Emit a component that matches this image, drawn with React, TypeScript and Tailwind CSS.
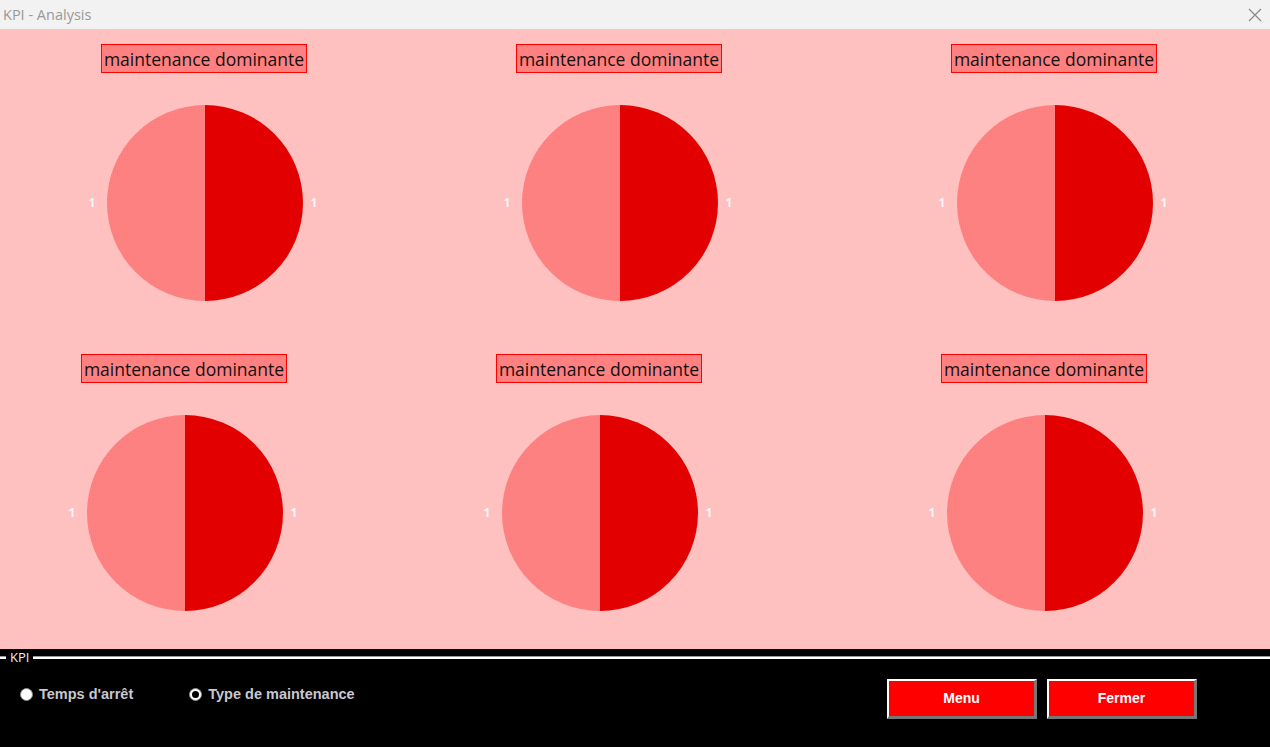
import React from "react";

function Pie() {
  return (
    <svg width="196" height="196" viewBox="0 0 196 196">
      <defs>
        <pattern id="dith" width="2" height="2" patternUnits="userSpaceOnUse">
          <rect width="2" height="2" fill="#ff8282" />
          <rect width="1" height="1" fill="#ff7a7a" />
        </pattern>
      </defs>
      <path d="M98 0 A98 98 0 0 0 98 196 Z" fill="url(#dith)" />
      <path d="M98 0 A98 98 0 0 1 98 196 Z" fill="#e30000" />
    </svg>
  );
}

function Chart({ className }: { className: string }) {
  return (
    <div className={"flex w-[240px] flex-col items-center " + className}>
      <div className="h-[29px] w-[206px] border border-[#ff0000] bg-[#ff8080] text-center text-[17.5px] leading-[28px] text-[#111] font-['Open_Sans',sans-serif] whitespace-nowrap">
        maintenance dominante
      </div>
      <div className="ml-[-6px] mt-[32px] flex h-[196px] items-center">
        <span className="w-[30px] text-center text-[12px] leading-[14px] font-bold text-[#f4f4f4] font-['Open_Sans',sans-serif]">1</span>
        <Pie />
        <span className="w-[22px] text-center text-[12px] leading-[14px] font-bold text-[#f4f4f4] font-['Open_Sans',sans-serif]">1</span>
      </div>
    </div>
  );
}

function Radio({ checked, label }: { checked: boolean; label: string }) {
  return (
    <div className="flex items-center gap-[6px]">
      {checked ? (
        <div className="flex h-[13px] w-[13px] items-center justify-center rounded-full border border-[#888] bg-white">
          <div className="h-[7px] w-[7px] rounded-full bg-black" />
        </div>
      ) : (
        <div className="h-[13px] w-[13px] rounded-full border border-[#888] bg-white" />
      )}
      <span className="text-[14.5px] font-bold text-[#c8c8d0] font-['Liberation_Sans',sans-serif] whitespace-nowrap">{label}</span>
    </div>
  );
}

function Btn({ label }: { label: string }) {
  return (
    <div className="flex h-[40px] w-[150px] items-center justify-center border-t-2 border-l-2 border-b-[3px] border-r-[3px] border-t-white border-l-white border-b-[#777] border-r-[#777] bg-[#ff0000] text-[14px] font-bold text-white font-['Liberation_Sans',sans-serif]">
      {label}
    </div>
  );
}

export default function App() {
  return (
    <div className="flex h-[747px] w-[1270px] flex-col overflow-hidden bg-black">
      <div className="flex h-[29px] items-center justify-between bg-[#f2f2f2] pl-[3px] pr-[8px]">
        <span className="text-[14.5px] text-[#999] font-['Open_Sans',sans-serif]">KPI - Analysis</span>
        <svg width="14" height="14" viewBox="0 0 14 14">
          <path d="M1 1 L13 13 M13 1 L1 13" stroke="#888" strokeWidth="1.2" />
        </svg>
      </div>
      <div className="flex h-[620px] flex-col bg-[#ffc0c0] pt-[15px]">
        <div className="flex">
          <Chart className="ml-[84px]" />
          <Chart className="ml-[175px]" />
          <Chart className="ml-[195px]" />
        </div>
        <div className="mt-[53px] flex">
          <Chart className="ml-[64px]" />
          <Chart className="ml-[175px]" />
          <Chart className="ml-[205px]" />
        </div>
      </div>
      <div className="flex flex-1 flex-col">
        <div className="mt-[1px] flex items-center">
          <div className="h-[3px] w-[6px] border-t border-t-[#999] border-b-2 border-b-white" />
          <span className="px-[4px] text-[13px] leading-[14px] text-[#e8f4ff] font-['Open_Sans',sans-serif]">KPI</span>
          <div className="h-[3px] flex-1 border-t border-t-[#999] border-b-2 border-b-white" />
        </div>
        <div className="mt-[15px] flex items-start">
          <div className="ml-[20px] mt-[5px] flex gap-[56px]">
            <Radio checked={false} label="Temps d'arrêt" />
            <Radio checked={true} label="Type de maintenance" />
          </div>
          <div className="ml-auto mr-[73px] flex gap-[10px]">
            <Btn label="Menu" />
            <Btn label="Fermer" />
          </div>
        </div>
      </div>
    </div>
  );
}
